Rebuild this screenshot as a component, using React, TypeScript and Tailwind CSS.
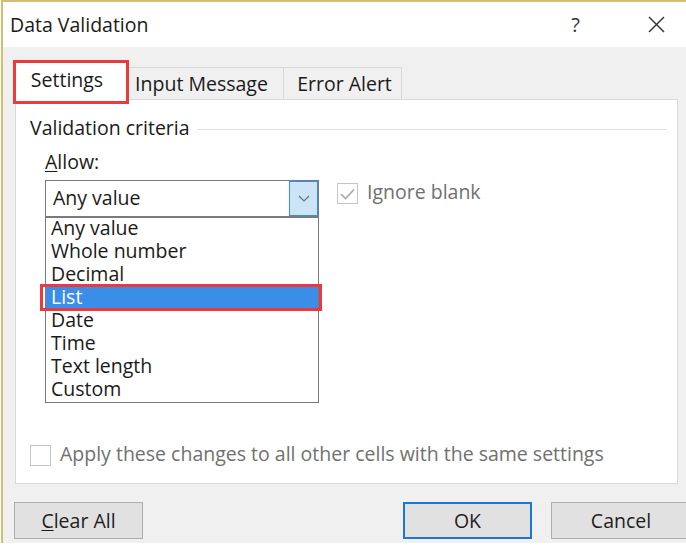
import React from 'react'

const allowOptions = ['Any value', 'Whole number', 'Decimal', 'List', 'Date', 'Time', 'Text length', 'Custom']

function Checkbox({ checked }: { checked?: boolean }) {
  return (
    <div className="w-[21px] h-[21px] border border-[#c4c4c4] bg-white flex items-center justify-center shrink-0">
      {checked && (
        <svg width="15" height="12" viewBox="0 0 15 12">
          <polyline points="1,6 5.5,10.5 14,1.5" fill="none" stroke="#a8a8a8" strokeWidth="1.6" />
        </svg>
      )}
    </div>
  )
}

function DialogButton({ label, underline, primary, width }: { label: string; underline?: boolean; primary?: boolean; width: string }) {
  return (
    <div
      className={`${width} h-[37px] shrink-0 bg-[#e1e1e1] flex items-center justify-center text-[#1e1e1e] ${
        primary ? 'border-2 border-[#1a78d4]' : 'border border-[#adadad]'
      }`}
    >
      {underline ? (
        <span>
          <span className="underline underline-offset-2">{label[0]}</span>
          {label.slice(1)}
        </span>
      ) : (
        label
      )}
    </div>
  )
}

export default function App() {
  return (
    <div className="w-[686px] h-[551px] bg-white overflow-hidden text-[19.5px] leading-none text-[#1a1a1a] font-['Open_Sans',sans-serif]">
      <div className="h-[543px] ml-px border-l-2 border-t-2 border-[#d5bd74] bg-[#f0f0f0] flex flex-col">
        {/* Title bar */}
        <div className="h-[45px] bg-white flex items-center pl-[7px] shrink-0">
          <span>Data Validation</span>
          <span className="ml-auto text-[20px] text-[#333]">?</span>
          <svg className="ml-[68px] mr-[21px]" width="17" height="17" viewBox="0 0 17 17">
            <line x1="1" y1="1" x2="16" y2="16" stroke="#333" strokeWidth="1.4" />
            <line x1="16" y1="1" x2="1" y2="16" stroke="#333" strokeWidth="1.4" />
          </svg>
        </div>

        {/* Tabs */}
        <div className="flex items-end ml-[11px] mt-[13px] h-[39px] shrink-0">
          <div className="relative z-10 w-[114px] h-[40px] -mb-px bg-white border border-b-0 border-[#d9d9d9] flex items-center justify-center pb-[2px] pr-[8px]">
            Settings
            <div className="absolute -left-[2px] -right-[2px] -top-px -bottom-[4px] border-[3px] border-[#ea3a40]" />
          </div>
          <div className="w-[156px] h-[32px] border border-l-0 border-b-0 border-[#d9d9d9] flex items-center justify-center pr-[8px]">
            Input Message
          </div>
          <div className="w-[118px] h-[32px] border border-l-0 border-b-0 border-[#d9d9d9] flex items-center justify-center pl-[4px]">
            Error Alert
          </div>
        </div>

        {/* Panel */}
        <div className="ml-[12px] w-[663px] h-[385px] bg-white border border-[#d9d9d9] shrink-0 flex flex-col">
          <div className="flex items-center h-[24px] mt-[16px] pl-[14px]">
            <span>Validation criteria</span>
            <div className="flex-1 h-px bg-[#dedede] ml-[8px] mr-[11px] mt-[2px]" />
          </div>

          <div className="h-[24px] mt-[10px] pl-[29px] flex items-center">
            <span>
              <span className="underline underline-offset-2">A</span>llow:
            </span>
          </div>

          <div className="flex mt-[6px] pl-[29px]">
            <div className="w-[274px] flex flex-col">
              <div className="h-[37px] border border-[#7a7a7a] bg-white flex items-stretch">
                <div className="flex-1 flex items-center pl-[7px] pb-[2px]">Any value</div>
                <div className="w-[29px] bg-[#cce4f7] border border-[#3c8ce0] flex items-center justify-center">
                  <svg width="12" height="7" viewBox="0 0 12 7">
                    <polyline points="1,1 6,6 11,1" fill="none" stroke="#6a6f78" strokeWidth="1.2" />
                  </svg>
                </div>
              </div>
              <div className="h-[186px] border border-[#7a7a7a] bg-white flex flex-col">
                {allowOptions.map((opt) => (
                  <div
                    key={opt}
                    className={`relative h-[23px] shrink-0 flex items-center pl-[5px] pb-[3px] ${
                      opt === 'List' ? 'bg-[#3b8ee8] text-white' : ''
                    }`}
                  >
                    {opt}
                    {opt === 'List' && (
                      <div className="absolute -left-[6px] -right-[4px] -top-[3px] -bottom-px border-[3px] border-[#ea3a40]" />
                    )}
                  </div>
                ))}
              </div>
            </div>

            <div className="ml-[18px] mt-[3px] flex items-center h-[21px] gap-[9px] text-[#707070]">
              <Checkbox checked />
              <span className="pb-[3px]">Ignore blank</span>
            </div>
          </div>

          <div className="flex items-center h-[22px] mt-[41px] pl-[14px] gap-[9px] text-[#707070]">
            <Checkbox />
            <span className="pb-[2px]">Apply these changes to all other cells with the same settings</span>
          </div>
        </div>

        {/* Buttons */}
        <div className="flex mt-[18px] ml-[11px]">
          <DialogButton label="Clear All" underline width="w-[129px]" />
          <div className="ml-[260px]">
            <DialogButton label="OK" primary width="w-[129px]" />
          </div>
          <div className="ml-[19px]">
            <DialogButton label="Cancel" width="w-[140px]" />
          </div>
        </div>
      </div>
    </div>
  )
}
